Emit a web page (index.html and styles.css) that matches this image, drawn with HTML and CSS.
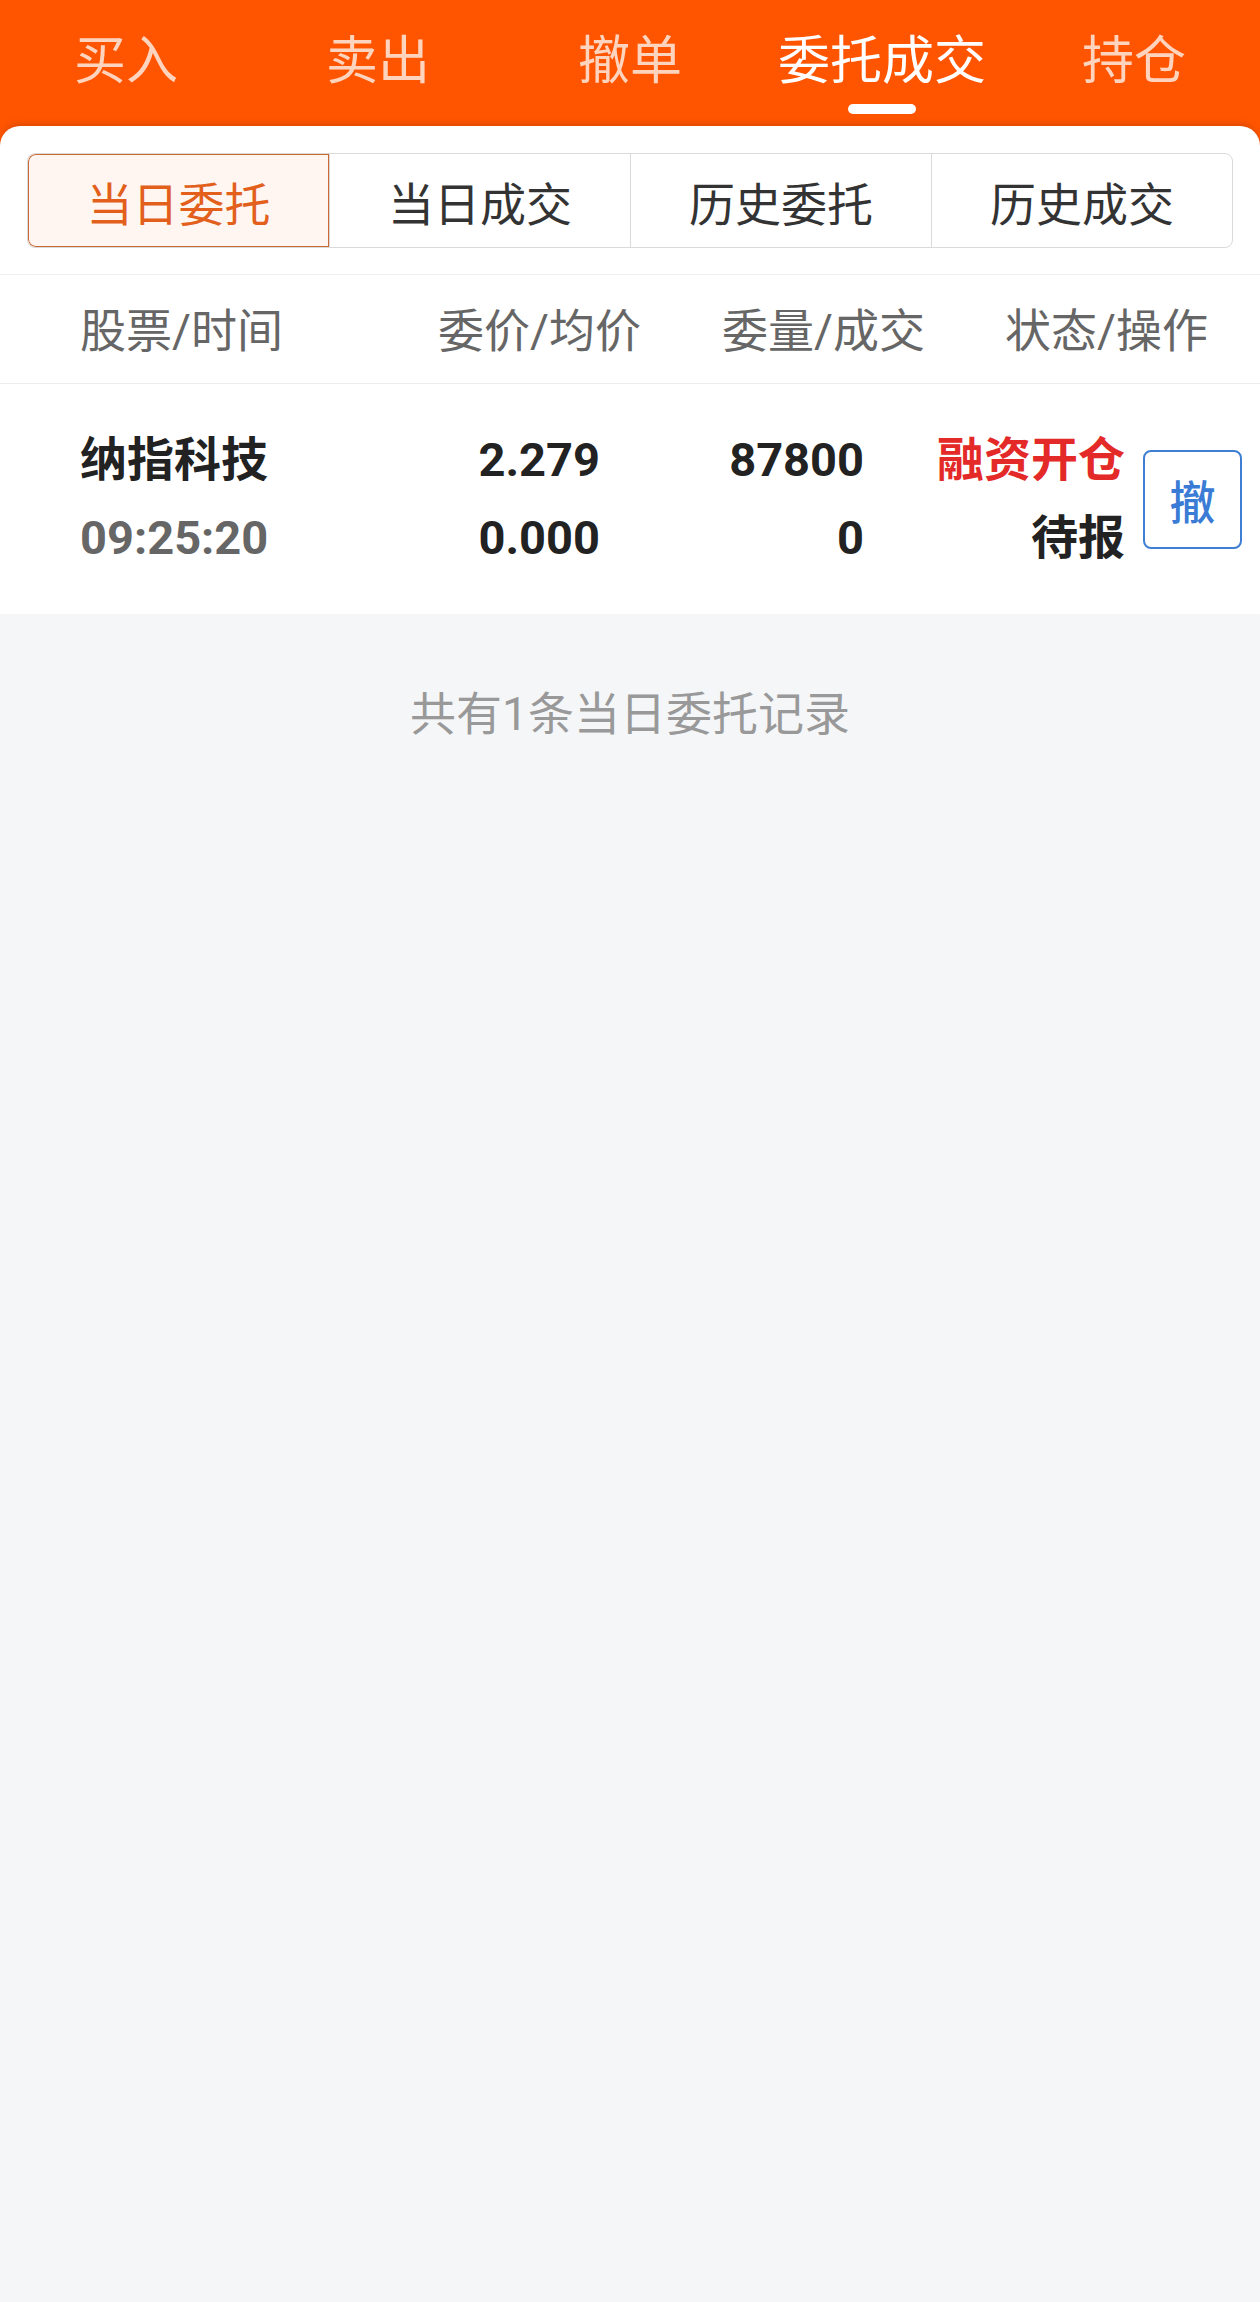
FILE: index.html
```html
<html lang="zh-CN">

<head>
    <meta charset="UTF-8">
    <meta name="viewport" content="width=device-width, initial-scale=1.0">
    <title>委托成交</title>

    <link rel="stylesheet" href="styles.css">
</head>

<body>
    <nav class="top-tabs">
        <a class="top-tab">买入</a>
        <a class="top-tab">卖出</a>
        <a class="top-tab">撤单</a>
        <a class="top-tab active">委托成交</a>
        <a class="top-tab">持仓</a>
    </nav>

    <div class="panel">
        <div class="seg-wrap">
            <ul class="seg">
                <li class="active">当日委托</li>
                <li>当日成交</li>
                <li>历史委托</li>
                <li>历史成交</li>
            </ul>
        </div>

        <div class="thead">
            <span>股票/时间</span>
            <span>委价/均价</span>
            <span>委量/成交</span>
            <span>状态/操作</span>
        </div>

        <div class="order-row">
            <div class="cell name">
                <span>纳指科技</span>
                <span class="time">09:25:20</span>
            </div>
            <div class="cell num">
                <span>2.279</span>
                <span>0.000</span>
            </div>
            <div class="cell num">
                <span>87800</span>
                <span>0</span>
            </div>
            <div class="cell num">
                <span class="type">融资开仓</span>
                <span>待报</span>
            </div>
            <button class="cancel-btn">撤</button>
        </div>
    </div>

    <p class="summary">共有1条当日委托记录</p>
</body>

</html>
```

FILE: styles.css
```css
html {
    font-family: Roboto, "Noto Sans CJK SC", sans-serif;
    background: #f5f6f8;
}

body {
    margin: 0;
    min-height: 2302px;
    background: #f5f6f8;
}

/* top orange tabs */
.top-tabs {
    display: grid;
    grid-template-columns: repeat(5, 1fr);
    height: 146px;
    background: #ff5500;
}

.top-tab {
    display: flex;
    flex-direction: column;
    align-items: center;
    padding-top: 26px;
    font-size: 52px;
    line-height: 72px;
    color: #ffd4bf;
    text-decoration: none;
}

.top-tab.active {
    color: #fff;
}

.top-tab.active::after {
    content: "";
    width: 68px;
    height: 10px;
    margin-top: 6px;
    border-radius: 5px;
    background: #fff;
}

/* white panel */
.panel {
    position: relative;
    margin-top: -20px;
    background: #fff;
    border-radius: 20px 20px 0 0;
    box-shadow: 0 -4px 6px -2px rgba(150, 50, 0, 0.35);
}

.seg-wrap {
    padding: 27px 27px 26px;
}

.seg {
    display: grid;
    grid-template-columns: repeat(4, 1fr);
    margin: 0;
    padding: 0;
    list-style: none;
    border: 1px solid #dadada;
    border-radius: 8px;
    overflow: hidden;
}

.seg li {
    height: 93px;
    display: flex;
    align-items: center;
    justify-content: center;
    font-size: 46px;
    color: #333;
    border-left: 1px solid #dadada;
}

.seg li:first-child {
    border-left: none;
}

.seg li.active {
    color: #e2601c;
    background: #fff6f2;
    box-shadow: inset 0 0 0 1px #c96a35;
    border-radius: 8px 0 0 8px;
}

/* table */
.thead {
    display: grid;
    grid-template-columns: 358px 284px 283px auto;
    align-items: center;
    height: 110px;
    padding-left: 80px;
    padding-bottom: 4px;
    box-sizing: border-box;
    border-top: 1px solid #f0f0f0;
    border-bottom: 1px solid #ececec;
    font-size: 46px;
    color: #666;
}

.order-row {
    display: grid;
    grid-template-columns: 320px 200px 264px 261px 99px;
    align-items: center;
    height: 230px;
    padding-left: 80px;
}

.cell {
    display: flex;
    flex-direction: column;
    font-size: 47px;
    font-weight: bold;
    line-height: 78px;
    color: #222;
}

.cell.num {
    align-items: flex-end;
}

.cell .time {
    color: #666;
}

.cell .type {
    color: #e42a28;
}

.cancel-btn {
    width: 99px;
    height: 99px;
    margin-left: 18px;
    padding: 0;
    font-family: inherit;
    font-size: 46px;
    font-weight: 500;
    color: #3a7bd5;
    background: #fff;
    border: 2px solid #3f7fd3;
    border-radius: 8px;
}

.summary {
    margin: 0;
    padding-top: 70px;
    text-align: center;
    font-size: 46px;
    line-height: 60px;
    color: #999;
}
```
